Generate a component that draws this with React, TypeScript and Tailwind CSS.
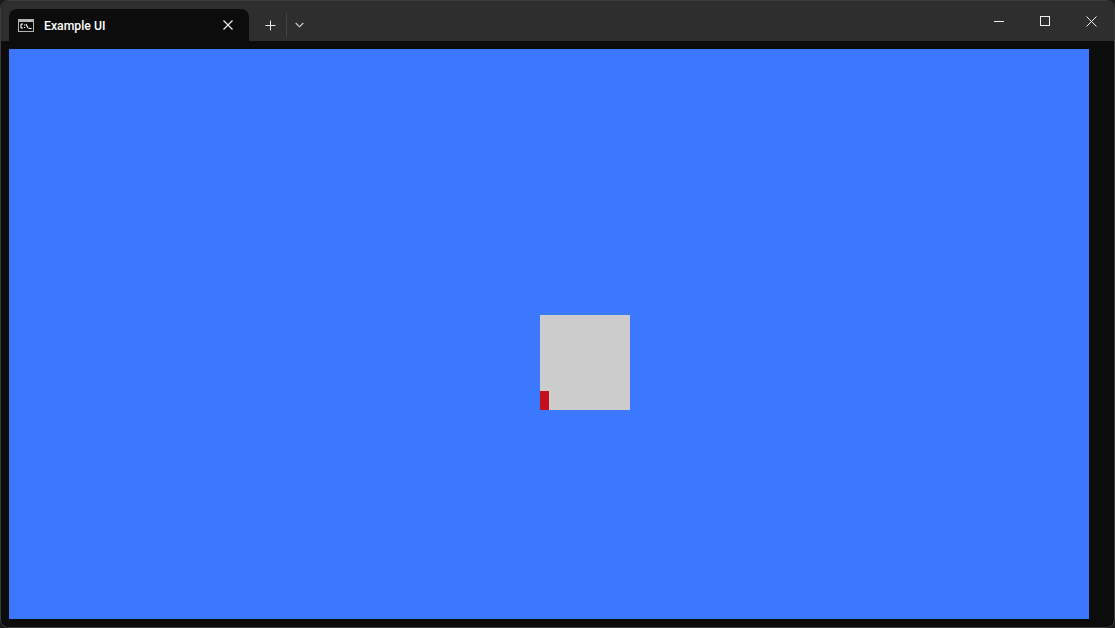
export default function App() {
  return (
    <div className="w-[1115px] h-[628px] overflow-hidden bg-[#1a1a1a] font-['Roboto','Noto_Sans',sans-serif]">
      <div className="w-full h-full flex flex-col rounded-[8px] overflow-hidden border border-[#3c3c3c] bg-[#0c0c0c]">
        <div className="h-[40px] shrink-0 bg-[#2e2e2e] flex items-start pl-[8px]">
          <div className="mt-[8px] w-[240px] h-[32px] bg-[#0c0c0c] rounded-t-[8px] flex items-center pl-[9px] pr-[16px]">
            <svg width="16" height="13" viewBox="0 0 16 13" className="shrink-0 mr-[10px] mt-px">
              <rect x="0.5" y="0.5" width="15" height="12" fill="#0c0c0c" stroke="#b4b4b4" />
              <rect x="1" y="1" width="14" height="2" fill="#b4b4b4" />
              <path d="M10 2h1M12 2h1" stroke="#f2f2f2" strokeWidth="1" />
              <path d="M5 5H3.500L3 5.500v3l.5.5H5M6.500 5.500v.9M6.500 8v.9M8 5l2 4M10.500 9.500h3" stroke="#ffffff" strokeWidth="1.100" fill="none" />
            </svg>
            <span className="text-[12.25px] font-medium text-white leading-none flex-1 whitespace-nowrap pt-[2px]">Example UI</span>
            <svg width="10" height="10" viewBox="0 0 10 10" className="shrink-0">
              <path d="M0.500 0.500l9 9M9.500 0.500l-9 9" stroke="#ececec" strokeWidth="1.200" />
            </svg>
          </div>
          <div className="h-[32px] mt-[8px] flex items-center pl-[16px]">
            <svg width="11" height="11" viewBox="0 0 11 11" className="shrink-0">
              <path d="M5.500 0.500v10M0.500 5.500h10" stroke="#ececec" strokeWidth="1" />
            </svg>
            <div className="w-px h-[24px] bg-[#454545] ml-[10px] mr-[9px]" />
            <svg width="9" height="6" viewBox="0 0 9 6" className="shrink-0 -ml-px">
              <path d="M0.700 1l3.800 3.800L8.300 1" stroke="#d6d6d6" strokeWidth="1.100" fill="none" />
            </svg>
          </div>
          <div className="flex-1" />
          <div className="h-[40px] flex items-center pr-[17px]">
            <div className="w-[10px] h-px bg-[#f0f0f0]" />
            <div className="w-[10px] h-[10px] border border-[#f0f0f0] ml-[36px]" />
            <svg width="11" height="11" viewBox="0 0 11 11" className="shrink-0 ml-[36px]">
              <path d="M0.500 0.500l10 10M10.500 0.500l-10 10" stroke="#f0f0f0" strokeWidth="1" />
            </svg>
          </div>
        </div>
        <div className="flex-1 pt-[8px] pl-[8px]">
          <div className="w-[1080px] h-[570px] bg-[#3b78ff] pt-[266px] pl-[531px]">
            <div className="w-[90px] h-[95px] bg-[#cccccc] flex items-end">
              <div className="w-[9px] h-[19px] bg-[#c50f1f]" />
            </div>
          </div>
        </div>
      </div>
    </div>
  );
}
